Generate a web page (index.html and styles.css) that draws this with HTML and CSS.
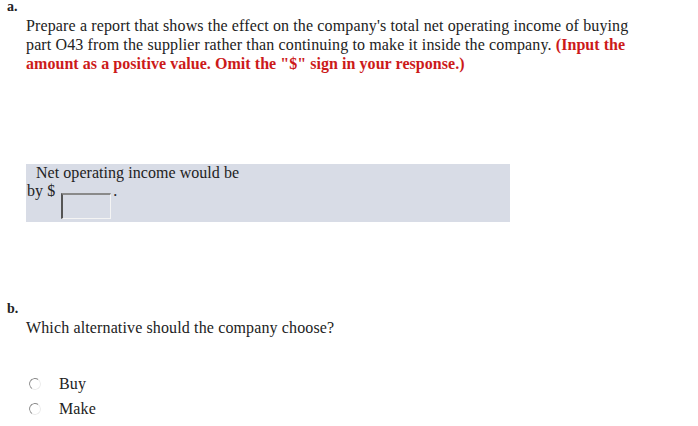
FILE: index.html
```html
<!DOCTYPE html>
<html>
<head>
<meta charset="utf-8">
<link rel="stylesheet" href="styles.css">
</head>
<body>
<div class="part part-a">
  <div class="label">a.</div>
  <p class="question">Prepare a report that shows the effect on the company's total net operating income of buying part O43 from the supplier rather than continuing to make it inside the company. <strong class="hint">(Input the amount as a positive value. Omit the "$" sign in your response.)</strong></p>
  <div class="answer-box">
    <div class="line1">Net operating income would be</div>
    <div class="line2">by $ <span class="input"></span><span class="dot">.</span></div>
  </div>
</div>
<div class="part part-b">
  <div class="label">b.</div>
  <p class="question">Which alternative should the company choose?</p>
  <div class="options">
    <div class="option"><span class="radio"></span><span class="opt-text">Buy</span></div>
    <div class="option"><span class="radio"></span><span class="opt-text">Make</span></div>
  </div>
</div>
</body>
</html>
```
FILE: styles.css
```css
html, body {
  margin: 0;
  padding: 0;
  background: #fff;
}
body {
  font-family: "Liberation Serif", "Times New Roman", serif;
  font-size: 16px;
  letter-spacing: 0.13px;
  color: #222;
}
.part {
  padding-left: 7px;
}
.label {
  font-weight: bold;
  font-size: 14px;
  line-height: 14px;
  height: 14px;
  letter-spacing: 0;
}
.question {
  margin: 2px 0 0 19px;
  line-height: 19px;
  width: 612px;
}
.hint {
  color: #cc1a1a;
  letter-spacing: 0.05px;
}
.answer-box {
  margin: 91px 0 0 19px;
  width: 484px;
  height: 58px;
  background: #d8dce6;
  box-sizing: border-box;
  line-height: 18px;
  letter-spacing: 0.05px;
}
.line1 {
  padding-left: 10px;
}
.line2 {
  padding-left: 1px;
}
.input {
  display: inline-block;
  width: 50px;
  height: 26px;
  box-sizing: border-box;
  border-top: 2px solid #8a8a8a;
  border-left: 2px solid #555;
  border-right: 1px solid #f4f4f4;
  border-bottom: 1px solid #f4f4f4;
  vertical-align: -23px;
  margin-left: 2px;
}
.dot {
  margin-left: 2px;
}
.part-b {
  margin-top: 80px;
}
.options {
  margin: 34px 0 0 22px;
}
.option {
  display: flex;
  align-items: center;
  height: 25px;
}
.radio {
  width: 12px;
  height: 12px;
  border-radius: 50%;
  box-sizing: border-box;
  border: 1.5px solid #ececec;
  border-top-color: #8c8c8c;
  border-left-color: #9a9a9a;
  background: #fff;
  transform: rotate(-10deg);
}
.opt-text {
  margin-left: 18px;
}
```
